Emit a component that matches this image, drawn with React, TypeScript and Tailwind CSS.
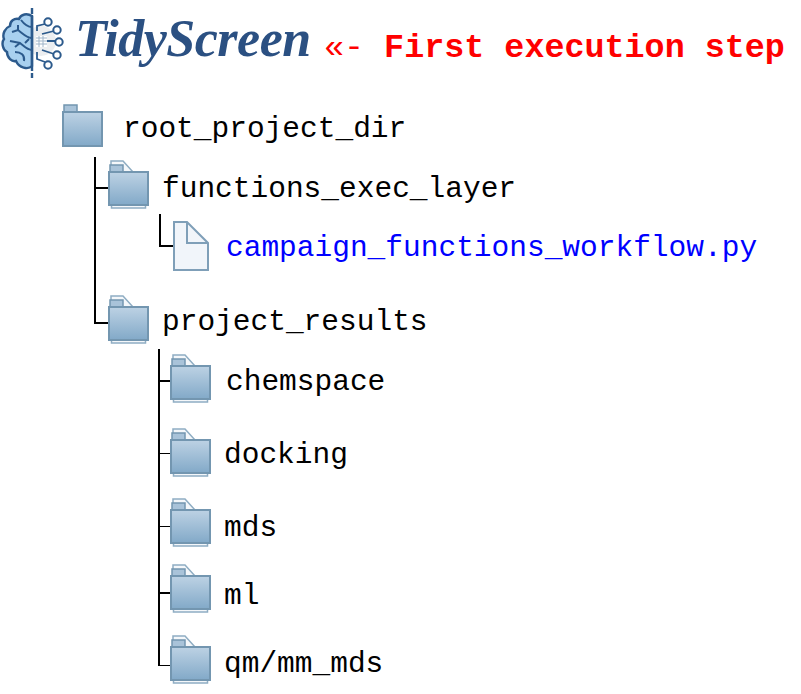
const mono = "font-['Liberation_Mono',monospace]";

function Folder() {
  return (
    <svg width="41" height="43" viewBox="0 0 41 43" className="shrink-0">
      <defs>
        <linearGradient id="rootFill" x1="0" y1="0" x2="0" y2="1">
          <stop offset="0" stopColor="#bdd2e4" />
          <stop offset="1" stopColor="#82a9c8" />
        </linearGradient>
      </defs>
      <rect x="2" y="1" width="13" height="7" fill="#a9c3d9" stroke="#7396b0" strokeWidth="1.5" />
      <rect x="1" y="8" width="39" height="34" fill="url(#rootFill)" stroke="#7396b0" strokeWidth="2" />
    </svg>
  );
}

function StackFolder() {
  return (
    <svg width="41" height="49" viewBox="0 0 41 49" className="shrink-0">
      <defs>
        <linearGradient id="stackFill" x1="0" y1="0" x2="0" y2="1">
          <stop offset="0" stopColor="#bdd2e4" />
          <stop offset="1" stopColor="#82a9c8" />
        </linearGradient>
      </defs>
      <path d="M3 10V1H15L25 12" fill="#f4f7fa" stroke="#8fadc3" strokeWidth="1.5" />
      <rect x="2" y="5" width="13" height="7" fill="#a9c3d9" stroke="#7396b0" strokeWidth="1.5" />
      <rect x="3.5" y="40" width="34" height="8" fill="#f4f7fa" stroke="#8fadc3" strokeWidth="1.5" />
      <rect x="1" y="12" width="39" height="33" fill="url(#stackFill)" stroke="#7396b0" strokeWidth="2" />
    </svg>
  );
}

function FileIcon() {
  return (
    <svg width="36" height="50" viewBox="0 0 36 50" className="shrink-0">
      <path d="M1 1H14L35 22V49H1Z" fill="#f1f5fa" stroke="#7f9fb8" strokeWidth="2" />
      <path d="M14 1V22H35" fill="none" stroke="#7f9fb8" strokeWidth="2" />
    </svg>
  );
}

function Logo() {
  return (
    <svg width="64" height="78" viewBox="0 0 64 78" className="shrink-0">
      <circle cx="40" cy="40" r="15" fill="#eceef0" />
      <path
        d="M31 15C26 12 20 13 18 18C13 17 9 20 9 25C4 27 1 33 3 38C0 42 2 49 6 51C6 57 11 61 15 60C18 67 27 69 31 65Z"
        fill="#a8d0ef"
        stroke="#2c5a8c"
        strokeWidth="2.4"
      />
      <path
        d="M31 26C26 26 23 23 20 19M31 37C26 37 21 32 17 29L11 31M31 49C26 49 23 45 19 42L9 40M23 60C24 54 20 51 14 51M17 29V24M24 42L28 38M14 46L19 42"
        fill="none"
        stroke="#2c5a8c"
        strokeWidth="2"
      />
      <path d="M31 7V13M31 15V70M31 72V77" stroke="#2c5a8c" strokeWidth="2.4" />
      <path
        d="M36 30V25L44 23M41 33L53 30M36 40H54M41 49L53 53M36 51V58L44 61"
        fill="none"
        stroke="#2c5a8c"
        strokeWidth="1.8"
      />
      <rect x="35" y="35" width="11" height="11" fill="#ffffff" />
      <path d="M35 37H46M35 40H46M35 43H46M38 35V46M42 35V46" stroke="#9fb4c8" strokeWidth="1" />
      <g fill="#ffffff" stroke="#2c5a8c" strokeWidth="2">
        <circle cx="47" cy="21" r="3.7" />
        <circle cx="56" cy="29" r="3.7" />
        <circle cx="58" cy="41" r="3.7" />
        <circle cx="56" cy="54" r="3.7" />
        <circle cx="47" cy="64" r="3.7" />
      </g>
    </svg>
  );
}

export default function App() {
  return (
    <div className={`w-[801px] h-[694px] bg-white overflow-hidden text-[29.5px] text-black ${mono}`}>
      <header className="h-[104px] pt-[1px] pl-[1px] flex items-start whitespace-nowrap">
        <Logo />
        <span className="ml-[10px] w-[240px] mt-[3px] text-[52px] leading-[70px] font-bold italic text-[#2b5082] font-['Liberation_Serif',serif] tracking-[-0.5px]">
          TidyScreen
        </span>
        <span className="ml-[9px] mt-[27px] text-[33.4px] leading-[40px] font-bold text-[#ff0000]">
          <span className="font-normal">«-</span> First execution step
        </span>
      </header>

      <div className="flex items-center pl-[62px] gap-[20px] h-[43px]">
        <Folder />
        <span className="leading-[30px] mt-[7px]">root_project_dir</span>
      </div>

      <div className="ml-[94px] mt-[10px] h-[167px] border-l-2 border-black">
        <div className="flex items-start pt-[3px]">
          <div className="w-[12px] h-[2px] mt-[27px] bg-black" />
          <StackFolder />
          <span className="ml-[13px] leading-[30px] mt-[14px]">functions_exec_layer</span>
        </div>
        <div className="flex items-start mt-[5px]">
          <div className="ml-[63px] w-[14px] h-[33px] border-l-2 border-b-2 border-black" />
          <div className="mt-[7px]">
            <FileIcon />
          </div>
          <span className="ml-[17px] mt-[19px] leading-[30px] text-[#0000ff]">campaign_functions_workflow.py</span>
        </div>
        <div className="flex items-start mt-[24px]">
          <div className="w-[12px] h-[2px] mt-[27px] bg-black" />
          <StackFolder />
          <span className="ml-[13px] leading-[30px] mt-[12px]">project_results</span>
        </div>
      </div>

      <div className="ml-[158px] mt-[25px] h-[317px] border-l-2 border-black">
        <div className="flex items-start pt-[5px]">
          <div className="w-[10px] h-[2px] mt-[26px] bg-black" />
          <StackFolder />
          <span className="ml-[15px] mt-[13px] leading-[30px]">chemspace</span>
        </div>
        <div className="flex items-start mt-[25px]">
          <div className="w-[10px] h-[1px] mt-[25px] bg-black" />
          <StackFolder />
          <span className="ml-[13px] mt-[12px] leading-[30px]">docking</span>
        </div>
        <div className="flex items-start mt-[21px]">
          <div className="w-[10px] h-[1px] mt-[28px] bg-black" />
          <StackFolder />
          <span className="ml-[13px] mt-[15px] leading-[30px]">mds</span>
        </div>
        <div className="flex items-start mt-[17px]">
          <div className="w-[10px] h-[2px] mt-[28px] bg-black" />
          <StackFolder />
          <span className="ml-[13px] mt-[17px] leading-[30px]">ml</span>
        </div>
        <div className="flex items-start mt-[22px]">
          <div className="w-[10px] h-[1px] mt-[30px] bg-black" />
          <StackFolder />
          <span className="ml-[13px] mt-[14px] leading-[30px]">qm/mm_mds</span>
        </div>
      </div>
    </div>
  );
}
